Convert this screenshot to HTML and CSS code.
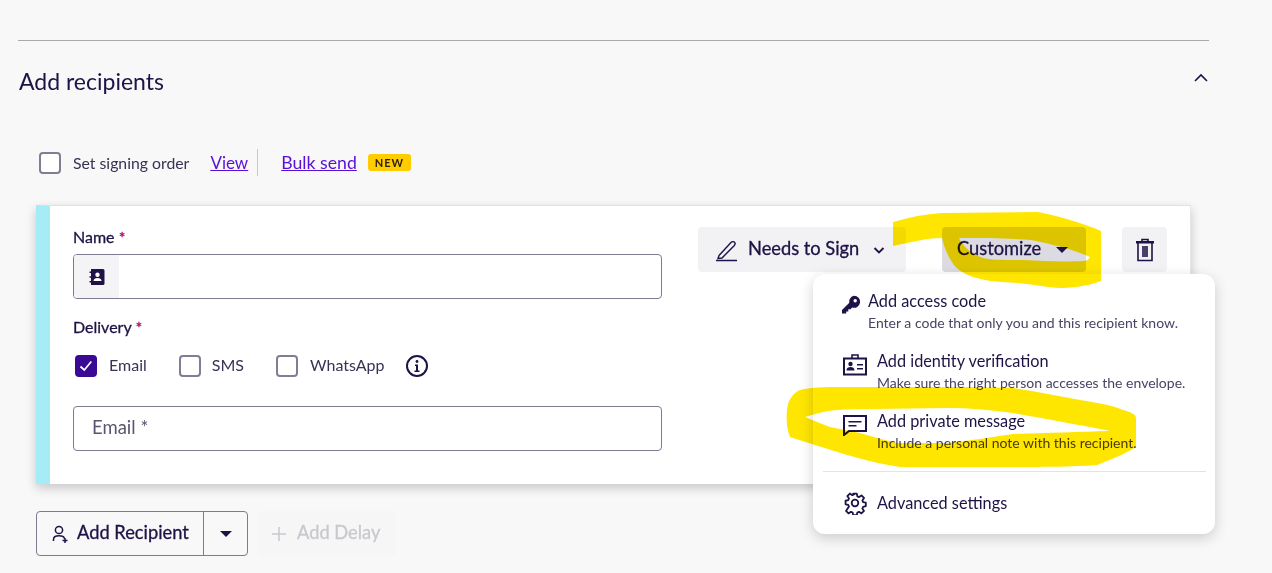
FILE: index.html
```html
<!DOCTYPE html>
<html lang="en">
<head>
  <meta charset="UTF-8" />
  <title>Add recipients</title>
  <link rel="stylesheet" href="styles.css">
</head>
<body>
  <div class="page">
    <div class="section-head">
      <h2>Add recipients</h2>
      <svg class="chevron-up" width="16" height="16" viewBox="0 0 16 16"><path d="M2 11 8 5l6 6" fill="none" stroke="#1e1246" stroke-width="1.6"/></svg>
    </div>

    <div class="order-row">
      <span class="check"></span>
      <span class="order-label">Set signing order</span>
      <a class="link view-link" href="#">View</a>
      <span class="vline"></span>
      <a class="link bulk-link" href="#">Bulk send</a>
      <span class="badge-new">NEW</span>
    </div>

    <div class="card">
      <div class="card-left">
        <div class="label">Name <span class="req">*</span></div>
        <div class="input name-input">
          <span class="input-addon">
            <svg width="20" height="20" viewBox="0 0 20 20"><path d="M4 2h12a1.500 1.500 0 0 1 1.500 1.500v13A1.500 1.500 0 0 1 16 18H4v-2.500H2.500V14H4v-3.200H2.500V9.200H4V6H2.500V4.500H4z" fill="#1e1246"/><circle cx="10.500" cy="7.800" r="2.200" fill="#fff"/><path d="M6.500 14c0-2 1.800-3 4-3s4 1 4 3z" fill="#fff"/></svg>
          </span>
        </div>
        <div class="label delivery-label">Delivery <span class="req">*</span></div>
        <div class="delivery-row">
          <span class="check checked">
            <svg width="16" height="16" viewBox="0 0 16 16"><path d="M2.500 8.500 6.300 12l7-8.500" fill="none" stroke="#fff" stroke-width="1.700"/></svg>
          </span>
          <span class="opt opt-email">Email</span>
          <span class="check"></span>
          <span class="opt opt-sms">SMS</span>
          <span class="check"></span>
          <span class="opt opt-wa">WhatsApp</span>
          <svg width="24" height="24" viewBox="0 0 24 24"><circle cx="12" cy="12" r="10" fill="none" stroke="#1e1246" stroke-width="2"/><circle cx="12" cy="7.500" r="1.400" fill="#1e1246"/><path d="M10 10.500h3v6h1.500V18h-5v-1.500H11V12h-1z" fill="#1e1246"/></svg>
        </div>
        <div class="input email-input">Email *</div>
      </div>

      <div class="card-actions">
        <button class="btn btn-sign">
          <svg width="24" height="24" viewBox="0 0 24 24"><path d="M5 17.500 17 4.500c1-1 2.800-1.200 3.500-.3.800.8.600 2.400-.4 3.500L8 20l-4 .5zM2 22.500h21" fill="none" stroke="#1e1246" stroke-width="1.400"/></svg>
          <span>Needs to Sign</span>
          <svg class="sign-chevron" width="12" height="12" viewBox="0 0 12 12"><path d="M1.500 4 6 8.500 10.500 4" fill="none" stroke="#1e1246" stroke-width="1.800"/></svg>
        </button>
        <button class="btn btn-custom">
          <span>Customize</span>
          <span class="caret"></span>
        </button>
        <button class="btn btn-trash">
          <svg width="20" height="24" viewBox="0 0 20 24"><path d="M7 3V1.500h6V3M3 4.500V22.500h14V4.500M8 8v11M10 8v11M12 8v11" fill="none" stroke="#1e1246" stroke-width="1.600"/><path d="M1 3h18v2.500H1z" fill="#1e1246"/></svg>
        </button>
      </div>
    </div>

    <div class="bottom-row">
      <div class="split-btn">
        <span class="split-main">
          <svg width="16" height="18" viewBox="0 0 16 18"><circle cx="7" cy="5" r="3.600" fill="none" stroke="#1e1246" stroke-width="1.500"/><path d="M1.500 16v-1.500C1.500 12 3.500 10.800 7 10.800s5 1 5.500 2.700M10.500 15.500h5M13 13v5" fill="none" stroke="#1e1246" stroke-width="1.500"/></svg>
          <span>Add Recipient</span>
        </span>
        <span class="split-arrow"><span class="caret"></span></span>
      </div>
      <div class="delay-btn">
        <svg width="14" height="14" viewBox="0 0 14 14"><path d="M7 0v14M0 7h14" stroke="#c9c8cf" stroke-width="1.500"/></svg>
        <span>Add Delay</span>
      </div>
    </div>

    <div class="popup">
      <div class="menu-item key-item">
        <svg class="menu-icon" width="20" height="20" viewBox="0 0 20 20"><path d="M13 0.800a6 6 0 1 1-1.800 11.700L9.500 14.200H7.300v2.200H5.200v2.200H1V15l7.300-7.300A6 6 0 0 1 13 .8z" fill="#1e1246"/><circle cx="14.200" cy="5.800" r="1.700" fill="#fff"/></svg>
        <div class="menu-text">
          <div class="menu-title">Add access code</div>
          <div class="menu-desc">Enter a code that only you and this recipient know.</div>
        </div>
      </div>
      <div class="menu-item">
        <svg class="menu-icon" width="24" height="22" viewBox="0 0 24 22"><path d="M1 4.500h22v16H1z" fill="none" stroke="#1e1246" stroke-width="2"/><path d="M9 4V1h6v3" fill="none" stroke="#1e1246" stroke-width="1.600"/><circle cx="7.500" cy="10" r="2.200" fill="#1e1246"/><path d="M3.500 16.500c0-2.400 1.800-3.400 4-3.400s4 1 4 3.400zM14 10h6v1.500h-6zM14 14h6v1.500h-6z" fill="#1e1246"/></svg>
        <div class="menu-text">
          <div class="menu-title">Add identity verification</div>
          <div class="menu-desc">Make sure the right person accesses the envelope.</div>
        </div>
      </div>
      <div class="menu-item">
        <svg class="menu-icon" width="24" height="22" viewBox="0 0 24 22"><path d="M1 2h22v15H6l-5 4z" fill="none" stroke="#1e1246" stroke-width="2"/><path d="M5.500 7h13v1.500h-13zM5.500 11h8v1.500h-8z" fill="#1e1246"/></svg>
        <div class="menu-text">
          <div class="menu-title">Add private message</div>
          <div class="menu-desc">Include a personal note with this recipient.</div>
        </div>
      </div>
      <div class="menu-divider"></div>
      <div class="menu-item settings-item">
        <svg class="menu-icon" width="24" height="24" viewBox="0 0 24 24"><path d="M10 1.500h4l.6 3.100 1.900.8 2.700-1.800 2.800 2.800-1.800 2.700.8 1.900 3 .6v4l-3 .6-.8 1.900 1.800 2.700-2.800 2.800-2.700-1.800-1.900.8-.6 3h-4l-.6-3-1.900-.8-2.700 1.800-2.800-2.800L5.300 16l-.8-1.900-3-.6v-4l3-.6.8-1.900-1.800-2.700 2.800-2.800 2.700 1.800 1.900-.8z" transform="translate(1.200 1.200) scale(.9)" fill="none" stroke="#1e1246" stroke-width="2" stroke-linejoin="round"/><circle cx="12" cy="12" r="3.300" fill="none" stroke="#1e1246" stroke-width="1.800"/></svg>
        <div class="menu-title">Advanced settings</div>
      </div>
    </div>

    <svg class="marker" width="1272" height="573" viewBox="0 0 1272 573">
      <path fill-rule="evenodd" d="M893 222C910 217 925 214 942 213L1038 212C1060 216 1085 224 1101 231L1101 281C1085 287 1070 288 1059 288C1045 287 1030 284 1017 283C1000 282 985 281 973 277C962 273 955 268 952 262C947 255 944 246 942 238C925 238 908 243 893 246Z M959 238C985 238 1005 238 1031 240C1055 245 1075 250 1090 257C1088 260 1086 261 1083 261C1060 262 1045 261 1024 260C1005 260 990 260 983 258C972 254 963 247 959 238Z"/>
      <path fill-rule="evenodd" d="M787 410C788 400 793 393 800 390C812 387 825 387 837 387L947 387C970 387 990 387 1013 388C1035 391 1058 396 1080 400C1098 403 1112 405 1123 410C1130 412 1136 414 1136 418L1136 447C1125 454 1110 460 1097 465C1070 467 1040 467 1013 467L900 467C880 464 865 460 847 455C828 449 808 443 790 437C787 430 786 420 787 410Z M805 417C815 414 825 411 837 410C850 409 862 409 875 409L947 408C970 408 992 410 1013 413C1045 419 1080 425 1110 431C1080 432 1045 433 1013 434C990 437 970 441 947 443L897 443C885 440 873 437 860 433C850 431 840 429 830 427C821 424 813 420 805 417Z"/>
    </svg>
  </div>
</body>
</html>
```

FILE: styles.css
```css
* {
  box-sizing: border-box;
}

body {
  margin: 0;
  font-family: "Lato", sans-serif;
  color: #1e1246;
  background: #f8f8f8;
}

.page {
  position: relative;
  width: 1272px;
  height: 573px;
  overflow: hidden;
  padding: 40px 0 0 36px;
}

.section-head {
  display: flex;
  justify-content: space-between;
  align-items: center;
  width: 1191px;
  height: 83px;
  margin-left: -18px;
  padding: 0 0 0 1px;
  border-top: 1px solid #a9a9ad;
}

.section-head h2 {
  margin: 0 0 3px;
  font-size: 23px;
  font-weight: 400;
}

.chevron-up {
  margin: 0 0 8px 0;
}

.order-row {
  display: flex;
  align-items: center;
  height: 27px;
  margin-top: 26px;
  padding-left: 3px;
  font-size: 15.800px;
}

.check {
  flex: none;
  width: 22px;
  height: 22px;
  background: #fff;
  border: 2px solid #827d93;
  border-radius: 4px;
}

.check.checked {
  display: flex;
  align-items: center;
  justify-content: center;
  background: #3b0a94;
  border-color: #3b0a94;
}

.order-label {
  margin: 0 21px 1px 12px;
  color: #3a3155;
}

.link {
  color: #5a0fd6;
  font-size: 17px;
  text-decoration: underline;
}

.bulk-link {
  font-size: 17.700px;
}

.vline {
  width: 1px;
  height: 27px;
  margin: 0 23px 0 9px;
  background: #c9c9cc;
}

.badge-new {
  margin-left: 11px;
  padding: 2px 7px 2px;
  background: #ffcc00;
  border-radius: 3px;
  font-size: 11px;
  font-weight: 700;
  letter-spacing: 1px;
  color: #2a1f10;
}

.card {
  display: flex;
  justify-content: space-between;
  width: 1155px;
  height: 279px;
  margin-top: 29px;
  padding: 21px 23px 0 23px;
  background: #fff;
  border-left: 14px solid #a5ecf7;
  border-top: 1px solid #e2e2e4;
  border-right: 1px solid #e6e6e8;
  box-shadow: 0 4px 10px rgba(0, 0, 0, 0.2);
}

.card-left {
  width: 589px;
}

.label {
  height: 20px;
  font-size: 16px;
  line-height: 20px;
  -webkit-text-stroke: 0.3px #1e1246;
}

.req {
  color: #b0005a;
  -webkit-text-stroke: 0.3px #b0005a;
}

.input {
  height: 45px;
  margin-top: 7px;
  background: #fff;
  border: 1px solid #7f7a8f;
  border-radius: 4px;
  overflow: hidden;
}

.name-input {
  display: flex;
}

.input-addon {
  display: flex;
  align-items: center;
  justify-content: center;
  width: 45px;
  background: #f4f4f6;
}

.delivery-label {
  margin-top: 18px;
}

.delivery-row {
  display: flex;
  align-items: center;
  height: 24px;
  margin-top: 17px;
  padding-left: 2px;
}

.opt {
  color: #3a3155;
  font-size: 16px;
  padding-bottom: 3px;
}

.opt-email {
  margin: 0 32px 0 12px;
}

.opt-sms {
  margin: 0 32px 0 11px;
}

.opt-wa {
  margin: 0 20px 0 12px;
}

.email-input {
  margin-top: 28px;
  padding-left: 18px;
  color: #5b5570;
  font-size: 18.500px;
  line-height: 41px;
}

.card-actions {
  display: flex;
  gap: 36px;
}

.btn {
  display: flex;
  align-items: center;
  height: 45px;
  padding: 0;
  border: none;
  border-radius: 4px;
  background: #f2f2f4;
  color: #1e1246;
  font-family: inherit;
  font-size: 18.300px;
  -webkit-text-stroke: 0.3px #1e1246;
}

.btn span:not(.caret) {
  margin-bottom: 3px;
}

.btn-sign {
  width: 208px;
  padding-left: 16px;
  gap: 10px;
}

.sign-chevron {
  margin-left: 4px;
}

.btn-custom {
  width: 144px;
  padding-left: 15px;
  gap: 15px;
  background: #dcdbe1;
}

.btn-trash {
  width: 45px;
  justify-content: center;
}

.caret {
  display: block;
  width: 0;
  height: 0;
  border-left: 6px solid transparent;
  border-right: 6px solid transparent;
  border-top: 6px solid #1e1246;
}

.bottom-row {
  display: flex;
  gap: 9px;
  margin-top: 27px;
}

.split-btn {
  display: flex;
  width: 212px;
  height: 45px;
  border: 1px solid #7f7a8f;
  border-radius: 4px;
}

.split-main {
  display: flex;
  align-items: center;
  gap: 9px;
  width: 167px;
  padding-left: 15px;
  border-right: 1px solid #7f7a8f;
  font-size: 18.300px;
  -webkit-text-stroke: 0.3px #1e1246;
}

.split-main span,
.delay-btn span {
  margin-bottom: 3px;
}

.split-arrow {
  display: flex;
  flex: 1;
  align-items: center;
  justify-content: center;
}

.delay-btn {
  display: flex;
  align-items: center;
  gap: 11px;
  width: 139px;
  height: 45px;
  padding-left: 15px;
  background: #f6f6f7;
  border-radius: 4px;
  color: #c9c8cf;
  font-size: 18.300px;
  -webkit-text-stroke: 0.3px #c9c8cf;
}

.popup {
  position: absolute;
  left: 813px;
  top: 274px;
  width: 402px;
  height: 260px;
  padding-top: 7px;
  background: #fff;
  border-radius: 12px;
  box-shadow: 0 4px 14px rgba(0, 0, 0, 0.18);
}

.menu-item {
  display: flex;
  align-items: flex-start;
  gap: 10px;
  height: 60px;
  padding-left: 30px;
}

.menu-icon {
  flex: none;
  margin-top: 13px;
}

.menu-text {
  padding-top: 9px;
}

.key-item {
  gap: 7px;
  padding-left: 28px;
}

.key-item .menu-icon {
  margin-top: 14px;
}

.menu-title {
  font-size: 16.300px;
  line-height: 22px;
}

.menu-desc {
  margin-top: 2px;
  color: #4a4263;
  font-size: 14px;
  line-height: 18px;
}

.menu-divider {
  height: 1px;
  margin: 10px 9px 0 10px;
  background: #e3e3e6;
}

.settings-item {
  align-items: center;
  margin-top: 1px;
}

.settings-item .menu-icon {
  margin-top: 0;
}

.marker {
  position: absolute;
  left: 0;
  top: 0;
  fill: #ffe600;
  mix-blend-mode: multiply;
  pointer-events: none;
}
```
